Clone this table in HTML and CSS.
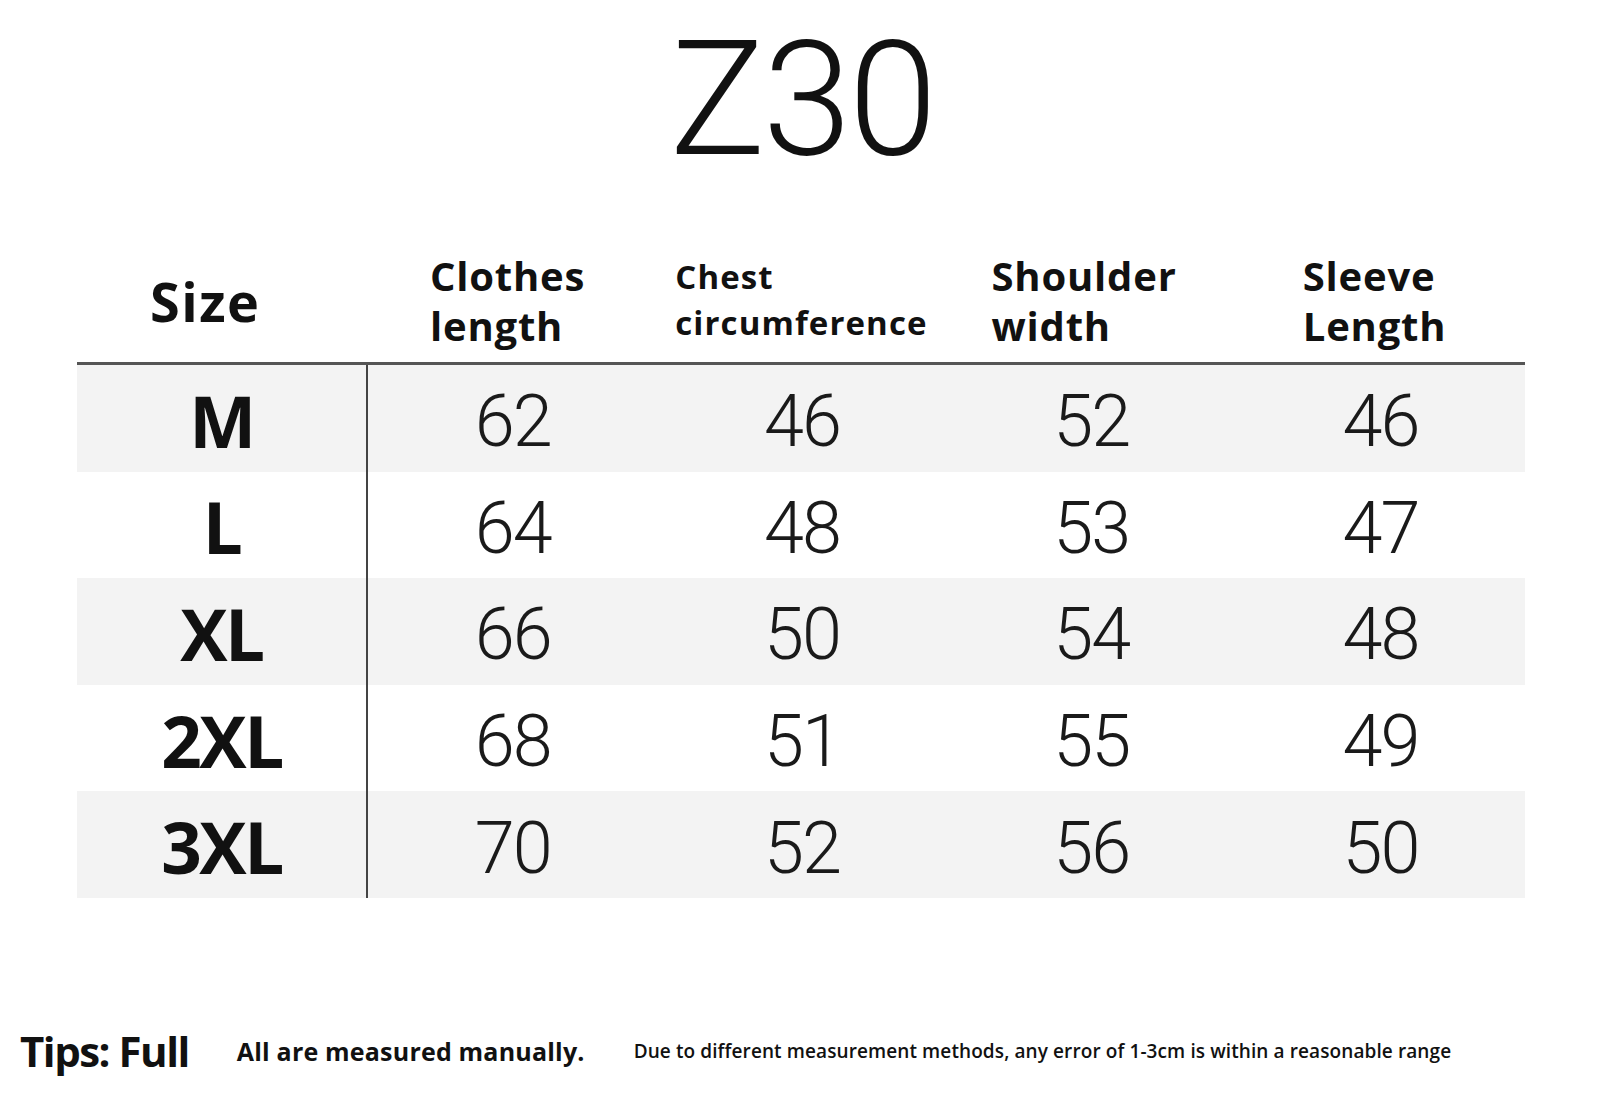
FILE: index.html
```html
<!DOCTYPE html>
<html lang="en">
<head>
<meta charset="utf-8">
<title>Z30 size chart</title>
<link rel="stylesheet" href="styles.css">
</head>
<body>
<main class="sheet">
  <h1 class="title">Z30</h1>
  <section class="chart">
    <div class="chart-head">
      <div class="head-cell head-size">Size</div>
      <div class="head-cell head-length">Clothes<br>length</div>
      <div class="head-cell head-chest">Chest<br>circumference</div>
      <div class="head-cell head-shoulder">Shoulder<br>width</div>
      <div class="head-cell head-sleeve">Sleeve<br>Length</div>
    </div>
    <div class="chart-body">
      <div class="row shade">
        <div class="size">M</div><div class="val">62</div><div class="val">46</div><div class="val">52</div><div class="val">46</div>
      </div>
      <div class="row">
        <div class="size">L</div><div class="val">64</div><div class="val">48</div><div class="val">53</div><div class="val">47</div>
      </div>
      <div class="row shade">
        <div class="size">XL</div><div class="val">66</div><div class="val">50</div><div class="val">54</div><div class="val">48</div>
      </div>
      <div class="row">
        <div class="size">2XL</div><div class="val">68</div><div class="val">51</div><div class="val">55</div><div class="val">49</div>
      </div>
      <div class="row shade">
        <div class="size">3XL</div><div class="val">70</div><div class="val">52</div><div class="val">56</div><div class="val">50</div>
      </div>
    </div>
  </section>
  <footer class="tips">
    <span class="tips-label">Tips: Full</span>
    <span class="tips-main">All are measured manually.</span>
    <span class="tips-note">Due to different measurement methods, any error of 1-3cm is within a reasonable range</span>
  </footer>
</main>
</body>
</html>
```
FILE: styles.css
```css
html, body {
  margin: 0;
  padding: 0;
  background: #ffffff;
}

body {
  font-family: "Open Sans", "Liberation Sans", sans-serif;
  color: #111111;
}

.sheet {
  width: 1600px;
  display: flex;
  flex-direction: column;
}

.title {
  margin: 20px 0 0;
  padding-left: 4px;
  font-family: Roboto, "Liberation Sans", sans-serif;
  font-weight: 300;
  font-size: 160px;
  line-height: 160px;
  letter-spacing: -3px;
  text-align: center;
  color: #111111;
}

.chart {
  margin: 60px 0 0 77px;
  width: 1448px;
}

.chart-head {
  height: 122px;
  display: grid;
  grid-template-columns: 291px repeat(4, 1fr);
  align-items: center;
}

.head-cell {
  font-weight: 700;
  font-size: 40px;
  line-height: 50px;
  letter-spacing: 0.8px;
  color: #111111;
}

.head-size {
  padding-left: 73px;
  font-size: 54px;
  line-height: 60px;
  letter-spacing: 1.5px;
}

.head-length {
  padding-left: 62px;
}

.head-chest {
  padding-left: 18px;
  padding-bottom: 2px;
  font-size: 33px;
  line-height: 46px;
  letter-spacing: 1.1px;
}

.head-shoulder {
  padding-left: 45px;
}

.head-sleeve {
  padding-left: 67px;
}

.chart-body {
  border-top: 3px solid #555555;
}

.row {
  height: 106.6px;
  display: grid;
  grid-template-columns: 291px repeat(4, 1fr);
  align-items: stretch;
  background: #ffffff;
}

.row.shade {
  background: #f3f3f3;
}

.size {
  display: flex;
  align-items: center;
  justify-content: center;
  padding-top: 4px;
  border-right: 2px solid #444444;
  font-family: "Open Sans", sans-serif;
  font-weight: 700;
  font-size: 71px;
  letter-spacing: -2.5px;
  color: #111111;
  line-height: 1;
}

.val {
  display: flex;
  align-items: center;
  justify-content: center;
  padding-top: 8px;
  font-family: Roboto, "Liberation Sans", sans-serif;
  font-weight: 300;
  font-size: 72px;
  letter-spacing: -2px;
  line-height: 1;
  color: #1a1a1a;
}

.tips {
  margin-top: 128px;
  padding-left: 20px;
  display: flex;
  align-items: center;
}

.tips-label {
  font-weight: 700;
  font-size: 42px;
  line-height: 50px;
  letter-spacing: -1.5px;
  color: #111111;
}

.tips-main {
  margin-left: 48px;
  font-weight: 700;
  font-size: 25px;
  line-height: 50px;
  letter-spacing: 0.2px;
  color: #111111;
}

.tips-note {
  margin-left: 49px;
  font-weight: 600;
  font-size: 19px;
  line-height: 50px;
  letter-spacing: 0.1px;
  color: #111111;
}
```
